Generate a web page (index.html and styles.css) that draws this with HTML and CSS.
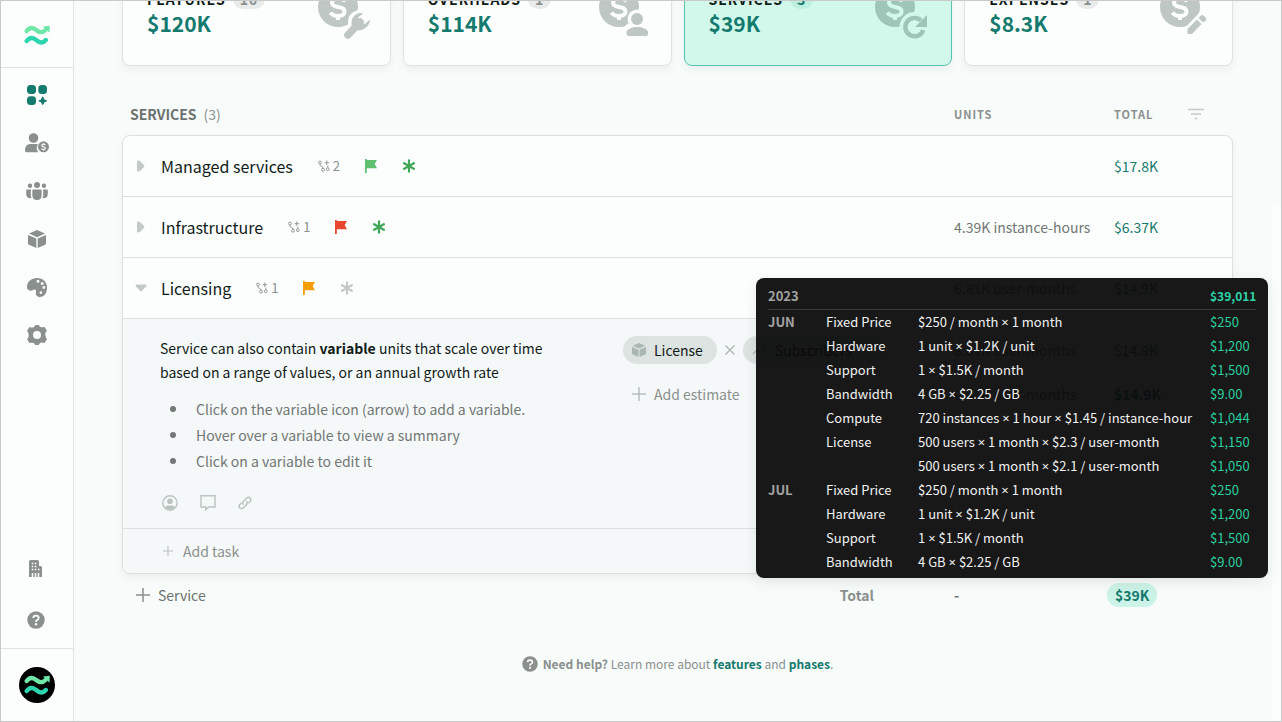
FILE: index.html
```html
<!DOCTYPE html>
<html lang="en">
<head>
<meta charset="utf-8">
<title>Services</title>
<link rel="stylesheet" href="styles.css">
</head>
<body>
<svg class="sprite" aria-hidden="true">
  <symbol id="i-waves" viewBox="0 0 26 20">
    <path d="M2.700 6C5 3 8 2 11.500 4.500C15 7.500 18 8.500 21.500 5" fill="none" stroke="#6ee7a8" stroke-width="4.400" stroke-linecap="round"/>
    <path d="M19 1.500L25.800 .8L25.500 7.800Z" fill="#6ee7a8"/>
    <path d="M2.700 16C5 13 8 12 11.500 14.500C15 17.500 18.500 19 21.800 15" fill="none" stroke="#2dd4b0" stroke-width="4.400" stroke-linecap="round"/>
  </symbol>
  <symbol id="i-apps" viewBox="0 0 20 20">
    <rect x="0" y="0" width="9" height="9" rx="3.500"/><rect x="11.300" y="0" width="8.700" height="9" rx="3.500"/><rect x="0" y="11.200" width="9" height="8.800" rx="3.500"/>
    <path d="M15.700 11.500C16.700 11.500 16.800 14 17.400 14.400S20 14.900 20 15.800S17.900 16.800 17.400 17.300S16.700 20 15.700 20S14.500 17.800 14 17.300S11.500 16.700 11.500 15.800S13.500 14.900 14 14.400S14.700 11.500 15.700 11.500Z"/>
  </symbol>
  <symbol id="i-userdollar" viewBox="0 0 24 20">
    <circle cx="8.500" cy="5" r="4.800"/><path d="M0 17.500C0 13 2.500 11 5.500 11H11.500L13 11.600A6.300 6.300 0 0 0 13.300 19.300H1.500Q0 19.300 0 17.500Z"/>
    <circle cx="18.500" cy="13.800" r="5.500"/><path d="M20.300 12Q19.800 11.200 18.500 11.200Q16.800 11.200 16.800 12.500Q16.800 13.500 18.500 13.800Q20.300 14.100 20.300 15.200Q20.300 16.500 18.500 16.500Q17 16.500 16.600 15.500M18.500 10.200V11.200M18.500 16.500V17.500" fill="none" stroke="#fcfefd" stroke-width="1.200"/>
  </symbol>
  <symbol id="i-team" viewBox="0 0 22 18">
    <circle cx="11" cy="3" r="3"/><circle cx="4" cy="3.800" r="2.200"/><circle cx="18" cy="3.800" r="2.200"/>
    <path d="M6.300 8.800Q6.300 7.600 7.500 7.600H14.500Q15.700 7.600 15.700 8.800V13Q15.700 18 11 18T6.300 13Z"/>
    <path d="M1.200 7.600H5.300Q4.800 8.200 4.800 9V13Q4.800 15 5.500 16.200Q.2 16.500 .2 12V8.600Q.2 7.600 1.200 7.600ZM20.800 7.600H16.700Q17.200 8.200 17.200 9V13Q17.200 15 16.500 16.200Q21.800 16.500 21.800 12V8.600Q21.800 7.600 20.800 7.600Z"/>
  </symbol>
  <symbol id="i-box" viewBox="0 0 18 18">
    <path d="M9 0L17 3.500L9 7.200L1 3.500ZM0 5L8.300 8.600V18L1 14.800Q0 14.400 0 13.500ZM18 5L9.700 8.600V18L17 14.800Q18 14.400 18 13.500Z"/>
  </symbol>
  <symbol id="i-palette" viewBox="0 0 20 19">
    <path fill-rule="evenodd" d="M0 9C0 3.500 4.500 0 10 0C16 0 20 4 20 9.500C20 15 17.500 19 13 19C9.500 19 8.500 16.500 9 14.500C9.300 12.500 9 11.500 7.500 11.500C6 11.500 5.500 13 3.500 12.800C1 12.500 0 11 0 9ZM9.500 3.300a1.500 1.500 0 1 0 3 0a1.500 1.500 0 1 0-3 0M13.700 5.600a1.500 1.500 0 1 0 3 0a1.500 1.500 0 1 0-3 0M15.500 9.500a1.400 1.400 0 1 0 2.800 0a1.400 1.400 0 1 0-2.800 0M12.500 14.600a1.400 1.400 0 1 0 2.800 0a1.400 1.400 0 1 0-2.800 0"/>
  </symbol>
  <symbol id="i-gear" viewBox="0 0 20 20">
    <path fill-rule="evenodd" d="M8.200 0H11.800Q12.800 2.800 15.500 2.200L17.600 1.900L19.900 5.800Q17.700 8 18.300 10Q18.500 12 19.900 14.200L17.600 18.100Q14.500 16.800 13 18Q12.200 18.800 11.800 20H8.200Q7.200 17.200 4.500 17.800L2.400 18.100L.1 14.200Q2.300 12 1.700 10Q1.500 8 .1 5.800L2.400 1.900Q5.500 3.200 7 2Q7.800 1.200 8.200 0ZM6 10a4 4 0 1 0 8 0a4 4 0 1 0-8 0"/>
  </symbol>
  <symbol id="i-building" viewBox="0 0 14 17">
    <path d="M1.500 0H8.500Q10 0 10 1.500V6H11.500Q13 6 13 7.500V17H0V1.500Q0 0 1.500 0Z"/>
    <path d="M2.800 3.500h1.500M5.800 3.500h1.500M2.800 6.500h1.500M5.800 6.500h1.500M2.800 9.500h1.500M5.800 9.500h1.500M9 9.500h1.500" stroke="#fcfefd" stroke-width="1.300"/>
    <path d="M3.500 13v4M6.500 13v4M9.500 13v4" stroke="#fcfefd" stroke-width="1.500"/>
  </symbol>
  <symbol id="i-help" viewBox="0 0 18 18">
    <circle cx="9" cy="9" r="8.700"/><path d="M6.200 7Q6.500 4.600 9 4.600Q11.700 4.600 11.700 6.900Q11.700 8.300 10 9.100Q9 9.600 9 10.900" fill="none" stroke="#fcfefd" stroke-width="1.800"/><circle cx="9" cy="13.300" r="1.200" fill="#fcfefd"/>
  </symbol>
  <symbol id="i-coin" viewBox="0 0 60 60">
    <circle cx="24" cy="23" r="20"/>
    <path class="cut" d="M31.500 17.500C30 15 27.500 14.500 24 14.500C20 14.500 18 16.200 18 18.800C18 22 21 22.500 24 23C27.500 23.600 30.500 24.200 30.500 27.500C30.500 30.500 28 32 24 32C20.500 32 18 31 16.500 28.500M24 10V14.500M24 32V36" fill="none" stroke-width="4"/>
  </symbol>
  <symbol id="i-branch" viewBox="0 0 12 12">
    <g fill="none" stroke="currentColor" stroke-width=".9"><circle cx="2" cy="2.500" r="1.400"/><circle cx="5" cy="9.700" r="1.400"/><circle cx="9.800" cy="9.200" r="1.400"/><path d="M2 4V5Q2 6 3.200 6.200Q5 6.600 5 8.300M9.800 7.800V5.600M6.500 2.700h4.600M8.800 .4v4.600"/></g>
  </symbol>
  <symbol id="i-flag" viewBox="0 0 12 14"><path d="M0 0H1.800V14H0ZM1.800 1H12L9.700 5L12 9.200H1.800Z"/></symbol>
  <symbol id="i-star" viewBox="0 0 14 14"><path d="M7 .5V13.500M1.300 3.700L12.700 10.300M12.700 3.700L1.300 10.300" fill="none" stroke="currentColor" stroke-width="2.200"/></symbol>
  <symbol id="i-plus" viewBox="0 0 14 14"><path d="M7 0V14M0 7H14" fill="none" stroke="currentColor" stroke-width="1.500"/></symbol>
  <symbol id="i-x" viewBox="0 0 10 10"><path d="M.5 .5L9.500 9.500M9.500 .5L.5 9.500" fill="none" stroke="currentColor" stroke-width="1.300"/></symbol>
  <symbol id="i-right" viewBox="0 0 10 12"><path d="M1 1.800Q1 0 2.600 .6L4.500 1.500L8 5Q9 6 8 7L4.500 10.500L2.600 11.400Q1 12 1 10.200Z"/></symbol>
  <symbol id="i-down" viewBox="0 0 12 10"><path d="M1.800 1.500Q0 1.500 .8 3.200L5 7.800Q6 8.800 7 7.800L11.200 3.200Q12 1.500 10.200 1.500Z"/></symbol>
  <symbol id="i-trend" viewBox="0 0 14 10"><path d="M1 9L5 5L8 7.500L13 1.500M9 1H13.200V5" fill="none" stroke="currentColor" stroke-width="1.400"/></symbol>
  <symbol id="i-person" viewBox="0 0 16 16"><circle cx="8" cy="8" r="7.200" fill="none" stroke="currentColor" stroke-width="1.400"/><circle cx="8" cy="6.200" r="2.800"/><path d="M3 12.200Q4 10.500 6 10.500H10Q12 10.500 13 12.200Q11 14.800 8 14.800T3 12.200Z"/></symbol>
  <symbol id="i-comment" viewBox="0 0 16 16"><path d="M1 .7H15V12H8.500L5.800 14.700V12H1Z" fill="none" stroke="currentColor" stroke-width="1.400"/></symbol>
  <symbol id="i-link" viewBox="0 0 14 14"><path d="M5.500 8.800Q4 7 5.500 5.300L8.500 2.200Q10.300 .5 12 2Q13.700 3.700 12.200 5.500L10.500 7.200M8.500 5.200Q10 7 8.500 8.700L5.500 11.800Q3.700 13.500 2 12Q.3 10.300 1.800 8.500L3.500 6.800" fill="none" stroke="currentColor" stroke-width="1.500"/></symbol>
  <symbol id="i-filter" viewBox="0 0 16 12"><path d="M0 1.500H16M3 6H13M6.500 10.500H9.500" fill="none" stroke="currentColor" stroke-width="1.700"/></symbol>
</svg>

<div class="app">
  <nav class="sidebar" aria-label="Main">
    <a class="brand" href="#" aria-label="Home"><svg width="26" height="20"><use href="#i-waves"/></svg></a>
    <div class="nav-list">
      <a class="nav-item active" href="#" aria-label="Projects"><svg width="20" height="20"><use href="#i-apps"/></svg></a>
      <a class="nav-item" href="#" aria-label="Rates"><svg width="24" height="20"><use href="#i-userdollar"/></svg></a>
      <a class="nav-item" href="#" aria-label="Team"><svg width="22" height="18"><use href="#i-team"/></svg></a>
      <a class="nav-item" href="#" aria-label="Products"><svg width="18" height="18"><use href="#i-box"/></svg></a>
      <a class="nav-item" href="#" aria-label="Themes"><svg width="20" height="19"><use href="#i-palette"/></svg></a>
      <a class="nav-item" href="#" aria-label="Settings"><svg width="20" height="20"><use href="#i-gear"/></svg></a>
    </div>
    <div class="nav-foot">
      <a class="nav-item" href="#" aria-label="Company"><svg width="14" height="17"><use href="#i-building"/></svg></a>
      <a class="nav-item" href="#" aria-label="Help"><svg width="18" height="18"><use href="#i-help"/></svg></a>
    </div>
    <div class="account"><button class="avatar" aria-label="Account"><svg width="26" height="20"><use href="#i-waves"/></svg></button></div>
  </nav>

  <main class="main">
    <section class="cards">
      <a class="card" href="#">
        <span class="card-title">FEATURES <span class="badge">10</span></span><span class="card-value">$120K</span>
        <svg class="card-icon" width="60" height="60"><use href="#i-coin"/>
          <path class="cut" d="M34 51L46 38" stroke-width="14" stroke-linecap="round"/><circle class="cut-fill" cx="46" cy="38" r="12"/>
          <path d="M34 51L46 38" stroke="currentColor" stroke-width="7.500" stroke-linecap="round"/><path d="M47 29Q44 28.500 41 31Q36 36 38 42L42 46Q48 47 52 43.500Q56 40 56 35.500L51 40L45 38L44 33.500L49 29.500Z"/></svg>
      </a>
      <a class="card" href="#">
        <span class="card-title">OVERHEADS <span class="badge">1</span></span><span class="card-value">$114K</span>
        <svg class="card-icon" width="60" height="60"><use href="#i-coin"/>
          <circle class="cut-fill" cx="42" cy="35" r="9.500"/><rect class="cut-fill" x="29" y="39" width="28" height="16" rx="7"/>
          <circle cx="42" cy="35" r="6"/><path d="M31.500 50V48C32 45 37 43 42 43S52.500 45 53 48V50Q53 52 51 52H33.500Q31.500 52 31.500 50Z"/></svg>
      </a>
      <a class="card selected" href="#">
        <span class="card-title">SERVICES <span class="badge">3</span></span><span class="card-value">$39K</span>
        <svg class="card-icon" width="60" height="60"><use href="#i-coin"/>
          <circle class="cut-fill" cx="43.500" cy="43" r="15"/>
          <path d="M50 36.500A9.200 9.200 0 1 0 52.300 46" fill="none" stroke="currentColor" stroke-width="4.500"/><path d="M56 31V43H44Z"/></svg>
      </a>
      <a class="card" href="#">
        <span class="card-title">EXPENSES <span class="badge">1</span></span><span class="card-value">$8.3K</span>
        <svg class="card-icon" width="60" height="60"><use href="#i-coin"/>
          <path class="cut-fill" d="M27 46L46 26L56 36L34 56L27 54Z"/>
          <path d="M31.500 45L41 35.500L45.500 40L36 50H31.500ZM42.500 34L45 31.500Q46.500 30.500 48 32L49.500 33.500Q51 35 50 36.500L47 38.500Z"/></svg>
      </a>
    </section>

    <header class="list-head cols">
      <h2 class="list-title">SERVICES <span class="count">(3)</span></h2>
      <span class="col-label col-units">UNITS</span>
      <span class="col-total"><span class="col-label">TOTAL</span><button class="filter" aria-label="Filter"><svg width="16" height="12"><use href="#i-filter"/></svg></button></span>
    </header>

    <section class="panel">
      <div class="row cols">
        <div class="row-name"><button class="toggle" aria-label="Expand"><svg width="10" height="12"><use href="#i-right"/></svg></button><span class="name">Managed services</span><span class="links"><svg width="12" height="12"><use href="#i-branch"/></svg>2</span><svg class="green-light" width="12" height="14"><use href="#i-flag"/></svg><svg class="green" width="14" height="14"><use href="#i-star"/></svg></div>
        <span class="col-units"></span><span class="money">$17.8K</span>
      </div>
      <div class="row cols">
        <div class="row-name"><button class="toggle" aria-label="Expand"><svg width="10" height="12"><use href="#i-right"/></svg></button><span class="name">Infrastructure</span><span class="links"><svg width="12" height="12"><use href="#i-branch"/></svg>1</span><svg class="red" width="12" height="14"><use href="#i-flag"/></svg><svg class="green" width="14" height="14"><use href="#i-star"/></svg></div>
        <span class="col-units">4.39K instance-hours</span><span class="money">$6.37K</span>
      </div>
      <div class="row cols">
        <div class="row-name"><button class="toggle" aria-label="Collapse"><svg width="12" height="10"><use href="#i-down"/></svg></button><span class="name">Licensing</span><span class="links"><svg width="12" height="12"><use href="#i-branch"/></svg>1</span><svg class="orange" width="12" height="14"><use href="#i-flag"/></svg><svg class="muted" width="14" height="14"><use href="#i-star"/></svg></div>
        <span class="col-units">6.81K user-months</span><span class="money">$14.9K</span>
      </div>
      <div class="detail">
        <div class="notes">
          <p>Service can also contain <b>variable</b> units that scale over time based on a range of values, or an annual growth rate</p>
          <ul><li>Click on the variable icon (arrow) to add a variable.</li><li>Hover over a variable to view a summary</li><li>Click on a variable to edit it</li></ul>
          <div class="note-tools">
            <button aria-label="Assign"><svg width="16" height="16"><use href="#i-person"/></svg></button>
            <button aria-label="Comment"><svg width="16" height="16"><use href="#i-comment"/></svg></button>
            <button aria-label="Link"><svg width="14" height="14"><use href="#i-link"/></svg></button>
          </div>
        </div>
        <div class="estimates">
          <div class="estimate">
            <div class="chips"><button class="chip"><svg width="14" height="14"><use href="#i-box"/></svg>License</button><svg class="times" width="10" height="10"><use href="#i-x"/></svg><button class="chip variable"><svg width="14" height="10"><use href="#i-trend"/></svg>Subscribers<svg width="10" height="10"><use href="#i-x"/></svg></button></div>
            <span class="col-units">6.81K user-months</span><span class="money">$14.9K</span>
          </div>
          <div class="estimate">
            <button class="add-estimate"><svg width="14" height="14"><use href="#i-plus"/></svg>Add estimate</button>
            <span class="col-units">6.81K user-months</span><b class="money">$14.9K</b>
          </div>
        </div>
      </div>
      <div class="add-task"><button><svg width="10" height="10"><use href="#i-plus"/></svg>Add task</button></div>
    </section>

    <footer class="totals cols">
      <div class="totals-left"><button class="add-service"><svg width="14" height="14"><use href="#i-plus"/></svg>Service</button><b class="total-label">Total</b></div>
      <b class="col-units">-</b><span><b class="total-pill">$39K</b></span>
    </footer>

    <p class="help"><svg width="16" height="16"><use href="#i-help"/></svg><span><b>Need help?</b> Learn more about <a href="#">features</a> and <a href="#">phases</a>.</span></p>

    <div class="tooltip" role="tooltip">
      <table>
        <thead><tr><th class="c-month" scope="col">2023</th><th class="c-item"></th><th></th><th class="c-cost">$39,011</th></tr></thead>
        <tbody>
          <tr><th scope="row">JUN</th><td>Fixed Price</td><td>$250 / month <i>×</i> 1 month</td><td>$250</td></tr>
          <tr><th></th><td>Hardware</td><td>1 unit <i>×</i> $1.2K / unit</td><td>$1,200</td></tr>
          <tr><th></th><td>Support</td><td>1 <i>×</i> $1.5K / month</td><td>$1,500</td></tr>
          <tr><th></th><td>Bandwidth</td><td>4 GB <i>×</i> $2.25 / GB</td><td>$9.00</td></tr>
          <tr><th></th><td>Compute</td><td>720 instances <i>×</i> 1 hour <i>×</i> $1.45 / instance-hour</td><td>$1,044</td></tr>
          <tr><th></th><td>License</td><td>500 users <i>×</i> 1 month <i>×</i> $2.3 / user-month</td><td>$1,150</td></tr>
          <tr><th></th><td></td><td>500 users <i>×</i> 1 month <i>×</i> $2.1 / user-month</td><td>$1,050</td></tr>
          <tr><th scope="row">JUL</th><td>Fixed Price</td><td>$250 / month <i>×</i> 1 month</td><td>$250</td></tr>
          <tr><th></th><td>Hardware</td><td>1 unit <i>×</i> $1.2K / unit</td><td>$1,200</td></tr>
          <tr><th></th><td>Support</td><td>1 <i>×</i> $1.5K / month</td><td>$1,500</td></tr>
          <tr><th></th><td>Bandwidth</td><td>4 GB <i>×</i> $2.25 / GB</td><td>$9.00</td></tr>
        </tbody>
      </table>
    </div>
  </main>
</div>
</body>
</html>
```

FILE: styles.css
```css
* { box-sizing: border-box; }
body {
  margin: 0;
  color: #111c19;
  background: #f7fbfa;
  font: 14px/24px "Source Sans Pro", "Noto Sans CJK SC", "Noto Sans", sans-serif;
}
svg { display: block; flex: none; fill: currentColor; }
.sprite { position: absolute; width: 0; height: 0; }
button { margin: 0; padding: 0; border: 0; background: none; font: inherit; color: inherit; cursor: pointer; }
a { color: inherit; text-decoration: none; }
p, h2, ul { margin: 0; }

.app { display: flex; height: 100vh; border: 1px solid #c9c9c9; overflow: hidden; }

/* Sidebar */
.sidebar { display: flex; flex-direction: column; flex: none; width: 73px; background: #fcfefd; border-right: 1px solid #dfe3e2; color: #8a908e; }
.brand { display: flex; align-items: center; justify-content: center; height: 67px; padding-top: 2px; border-bottom: 1px solid #dfe3e2; }
.nav-list { display: flex; flex-direction: column; flex: 1; padding-top: 3px; }
.nav-item { display: flex; align-items: center; justify-content: center; height: 48px; }
.nav-item.active { color: #157a6e; }
.nav-foot { padding: 0 3px 3px 0; }
.nav-foot .nav-item { height: 51px; }
.account { display: flex; align-items: center; justify-content: center; height: 73px; border-top: 1px solid #dfe3e2; }
.avatar { display: flex; align-items: center; justify-content: center; width: 36px; height: 36px; border-radius: 50%; background: #000; }

/* Main */
.main { position: relative; flex: 1; min-width: 0; padding: 0 48px; }
.main::after { content: ""; position: absolute; top: 204px; right: 0; bottom: 0; width: 9px; background: #fbfdfd; }
.cards { display: grid; grid-template-columns: repeat(4, 1fr); gap: 12px; margin-top: -40px; }
.card { display: flex; flex-direction: column; position: relative; height: 105px; padding: 25px 24px; background: #fcfefd; border: 1px solid #dfe2e1; border-radius: 8px; box-shadow: 0 4px 10px rgba(0, 0, 0, .05); --card-bg: #fcfefd; }
.card.selected { --card-bg: #d2f8ec; background: #d2f8ec; border-color: #58c4ac; }
.card-title { display: flex; align-items: center; gap: 7px; font-size: 14px; font-weight: 700; letter-spacing: 1px; }
.badge { padding: 0 7px; border-radius: 10px; background: #e8ebea; color: #8a908e; line-height: 20px; }
.selected .badge { background: #bdeee0; color: #157a6e; }
.card-value { color: #157a6e; font-size: 21px; font-weight: 700; }
.card-icon { position: absolute; top: 22px; right: 16px; color: #bfc7c4; }
.selected .card-icon { right: 20px; color: #9fc4b8; }
.cut { fill: none; stroke: var(--card-bg); }
.cut-fill { fill: var(--card-bg); }

.cols { display: grid; grid-template-columns: minmax(0, 1fr) 160px 118px; align-items: center; }
.col-units { color: #717775; }
.list-head { padding: 36px 1px 9px 8px; }
.list-title { display: flex; gap: 7px; color: #6c726f; font-size: 14px; font-weight: 700; }
.count { color: #8a908e; font-weight: 400; }
.col-label { color: #8a908e; font-size: 11px; font-weight: 700; letter-spacing: 1px; }
.col-total { display: flex; align-items: center; justify-content: space-between; padding-right: 28px; }
.filter { color: #c3cac7; }

.panel { overflow: hidden; background: #fcfefd; border: 1px solid #dce1df; border-radius: 8px; box-shadow: 0 4px 10px rgba(0, 0, 0, .05); }
.row { height: 61px; border-bottom: 1px solid #dce1df; }
.row-name { display: flex; align-items: center; gap: 25px; padding-left: 12px; }
.toggle { display: flex; justify-content: center; width: 12px; margin-right: -11px; color: #c3c9c7; }
.name { font-size: 16px; }
.links { display: flex; align-items: center; gap: 3px; color: #8a908e; font-size: 13px; }
.money { color: #157a6e; }
.green-light { color: #5fc071; }
.green { color: #3fa757; }
.red { color: #e8492e; }
.orange { color: #f59e0b; }
.muted { color: #c3c9c7; }

.detail { display: grid; grid-template-columns: minmax(0, 1fr) 609px; padding: 17px 0 17px 37px; background: #f5f8f8; border-bottom: 1px solid #dce1df; }
.notes p { max-width: 410px; }
.notes ul { padding-left: 10px; margin-top: 12px; color: #717775; line-height: 26px; list-style: none; }
.notes li { display: flex; align-items: center; gap: 20px; }
.notes li::before { content: ""; width: 6px; height: 6px; border-radius: 50%; background: #717775; }
.note-tools { display: flex; align-items: center; gap: 22px; margin-top: 21px; padding-left: 2px; color: #b9c4bf; }
.estimates { display: flex; flex-direction: column; gap: 16px; }
.estimate { display: grid; grid-template-columns: minmax(0, 1fr) 160px 118px; align-items: center; height: 28px; }
.chips { display: flex; align-items: center; gap: 8px; }
.chip { display: flex; align-items: center; gap: 8px; height: 28px; padding: 0 14px 0 9px; border-radius: 14px; background: #dde3e0; }
.chip.variable { gap: 9px; }
.chip svg, .times { color: #aab7b1; }
.add-estimate { display: flex; align-items: center; gap: 8px; padding-left: 9px; color: #8a908e; }
.add-estimate svg, .add-task svg { color: #b4beba; }
.add-task { display: flex; align-items: center; height: 44px; padding-left: 40px; background: #f5f8f8; color: #8a908e; }
.add-task button { display: flex; align-items: center; gap: 10px; }

.totals { height: 42px; padding: 0 1px; }
.totals-left { display: flex; align-items: center; justify-content: space-between; padding: 0 80px 0 13px; }
.add-service { display: flex; align-items: center; gap: 8px; color: #6c726f; }
.add-service svg, .total-label { color: #8a908e; }
.total-pill { display: inline-block; margin-left: -7px; padding: 0 8px; border-radius: 12px; background: #ccf3e7; color: #157a6e; }

.help { display: flex; align-items: center; justify-content: center; gap: 5px; margin-top: 36px; color: #8a908e; font-size: 12px; }
.help a { color: #157a6e; font-weight: 700; }

/* Cost breakdown */
.tooltip { position: absolute; z-index: 1; top: 277px; right: 13px; width: 512px; height: 300px; padding: 7px 12px 4px; overflow: hidden; border-radius: 8px; background: rgba(10, 10, 10, .94); box-shadow: 0 4px 16px rgba(0, 0, 0, .08); color: #f2f2f2; font-size: 13px; }
.tooltip table { width: 100%; border-collapse: collapse; table-layout: fixed; }
.tooltip th, .tooltip td { height: 24px; padding: 0; text-align: left; white-space: nowrap; line-height: 23px; }
.tooltip th { color: #a3a3a3; }
.tooltip i { font-family: "Noto Sans", sans-serif; font-style: normal; }
.tooltip thead th { padding-bottom: 2px; border-bottom: 1px solid #3a3a3a; line-height: 21px; }
.tooltip .c-month { width: 58px; }
.tooltip .c-item { width: 92px; }
.tooltip .c-cost { width: 46px; color: #2dd4a8; font-size: 12px; }
.tooltip td:last-child { color: #2bcf9f; }
```
